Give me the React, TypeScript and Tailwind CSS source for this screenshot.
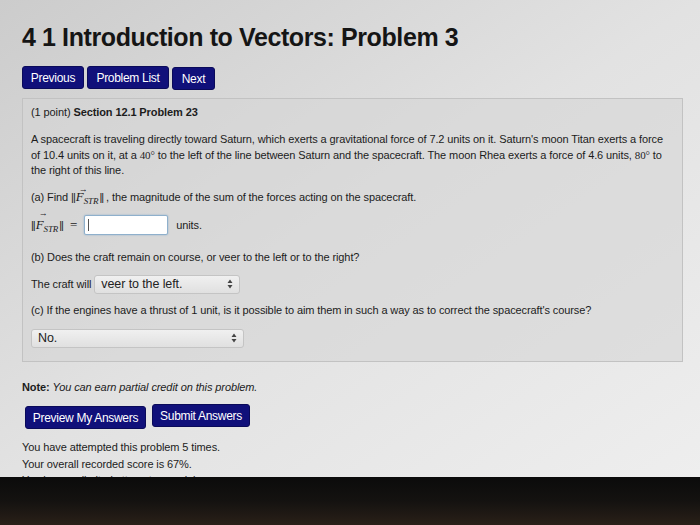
import React from "react";

function Btn({ children, className = "" }: { children: React.ReactNode; className?: string }) {
  return (
    <button
      className={
        "bg-[#10107a] text-white rounded-[3px] border border-[#0a0a5a] text-[12px] tracking-[-0.3px] leading-none flex items-center justify-center " +
        className
      }
    >
      {children}
    </button>
  );
}

function FStr() {
  return (
    <span className="inline-flex items-baseline">
      <span className="tracking-[-1px] mr-[1px]">||</span>
      <span className="relative font-['Liberation_Serif',serif] italic text-[13px]">
        F
        <span className="absolute left-[3px] -top-[8px] text-[9px] not-italic">→</span>
      </span>
      <span className="font-['Liberation_Serif',serif] italic text-[9px] relative top-[3px]">STR</span>
      <span className="tracking-[-1px] ml-[1px]">||</span>
    </span>
  );
}

function Arrows() {
  return (
    <svg width="6" height="10" viewBox="0 0 6 10" className="text-[#444]">
      <path d="M3 0.5 L5.5 4 H0.5 Z M3 9.5 L5.5 6 H0.5 Z" fill="currentColor" />
    </svg>
  );
}

function Select({ value, className = "" }: { value: string; className?: string }) {
  return (
    <div
      className={
        "h-[19px] flex items-center justify-between pl-[6px] pr-[6px] rounded-[3px] border border-[#c4c4c4] bg-linear-to-b from-[#f0f0f0] to-[#e0e0e0] text-[12.5px] text-[#222] " +
        className
      }
    >
      <span>{value}</span>
      <Arrows />
    </div>
  );
}

export default function App() {
  return (
    <div className="w-[700px] h-[525px] flex flex-col overflow-hidden font-['Liberation_Sans',Arial,sans-serif] text-[#1c1c1c]">
      <div className="h-[477px] shrink-0 overflow-hidden bg-linear-to-br from-[#cccccc] via-[#e2e2e2] to-[#eeeeee] px-[22px] pt-[22px]">
        <h1 className="text-[25px] font-bold leading-[30px] tracking-[-0.4px] text-[#151515]">
          4 1 Introduction to Vectors: Problem 3
        </h1>
        <div className="flex gap-[3px] mt-[14px]">
          <Btn className="w-[62px] h-[23px]">Previous</Btn>
          <Btn className="w-[82px] h-[23px]">Problem List</Btn>
          <Btn className="w-[43px] h-[23px] mt-[1px]">Next</Btn>
        </div>
        <div className="mt-[8px] w-[661px] h-[264px] border border-[#c2c2c2] bg-[#d6d6d6]/60 px-[8px] pt-[6px] text-[11px] tracking-[-0.1px]">
          <p className="leading-[14px]">
            (1 point) <b>Section 12.1 Problem 23</b>
          </p>
          <p className="mt-[13px] leading-[15.5px]">
            A spacecraft is traveling directly toward Saturn, which exerts a gravitational force of 7.2 units on it. Saturn's moon Titan exerts a force of 10.4 units on it, at a{" "}
            <span className="font-['Liberation_Serif',serif]">40°</span> to the left of the line between Saturn and the spacecraft. The moon Rhea exerts a force of 4.6 units,{" "}
            <span className="font-['Liberation_Serif',serif]">80°</span> to the right of this line.
          </p>
          <p className="mt-[10px] leading-[16px] flex items-baseline gap-[3px]">
            (a) Find <FStr />, the magnitude of the sum of the forces acting on the spacecraft.
          </p>
          <div className="mt-[9px] flex items-center gap-[5px] h-[21px]">
            <FStr />
            <span className="font-['Liberation_Serif',serif] text-[13px] mx-[2px]">=</span>
            <div className="w-[84px] h-[20px] bg-white border border-[#8fb0cc] rounded-[2px] shadow-[0_0_2px_#8fb0cc] flex items-center pl-[3px]">
              <span className="w-px h-[12px] bg-[#555]" />
            </div>
            <span className="ml-[3px]">units.</span>
          </div>
          <p className="mt-[13px] leading-[16px]">(b) Does the craft remain on course, or veer to the left or to the right?</p>
          <div className="mt-[10px] flex items-center gap-[3px]">
            <span>The craft will</span>
            <Select value="veer to the left." className="w-[146px]" />
          </div>
          <p className="mt-[8px] leading-[16px]">
            (c) If the engines have a thrust of 1 unit, is it possible to aim them in such a way as to correct the spacecraft's course?
          </p>
          <Select value="No." className="mt-[11px] w-[213px]" />
        </div>
        <p className="mt-[18px] text-[11px] tracking-[-0.1px] leading-[14px]">
          <b>Note:</b> <i>You can earn partial credit on this problem.</i>
        </p>
        <div className="flex gap-[6px] mt-[10px] ml-[3px]">
          <Btn className="w-[121px] h-[23px] mt-[2px]">Preview My Answers</Btn>
          <Btn className="w-[98px] h-[23px]">Submit Answers</Btn>
        </div>
        <div className="mt-[10px] text-[11px] tracking-[-0.1px] leading-[16.5px]">
          <p>You have attempted this problem 5 times.</p>
          <p>Your overall recorded score is 67%.</p>
          <p>You have unlimited attempts remaining.</p>
        </div>
      </div>
      <div className="flex-1 bg-linear-to-b from-[#0b0b0b] via-[#141210] to-[#2a2018]" />
    </div>
  );
}
